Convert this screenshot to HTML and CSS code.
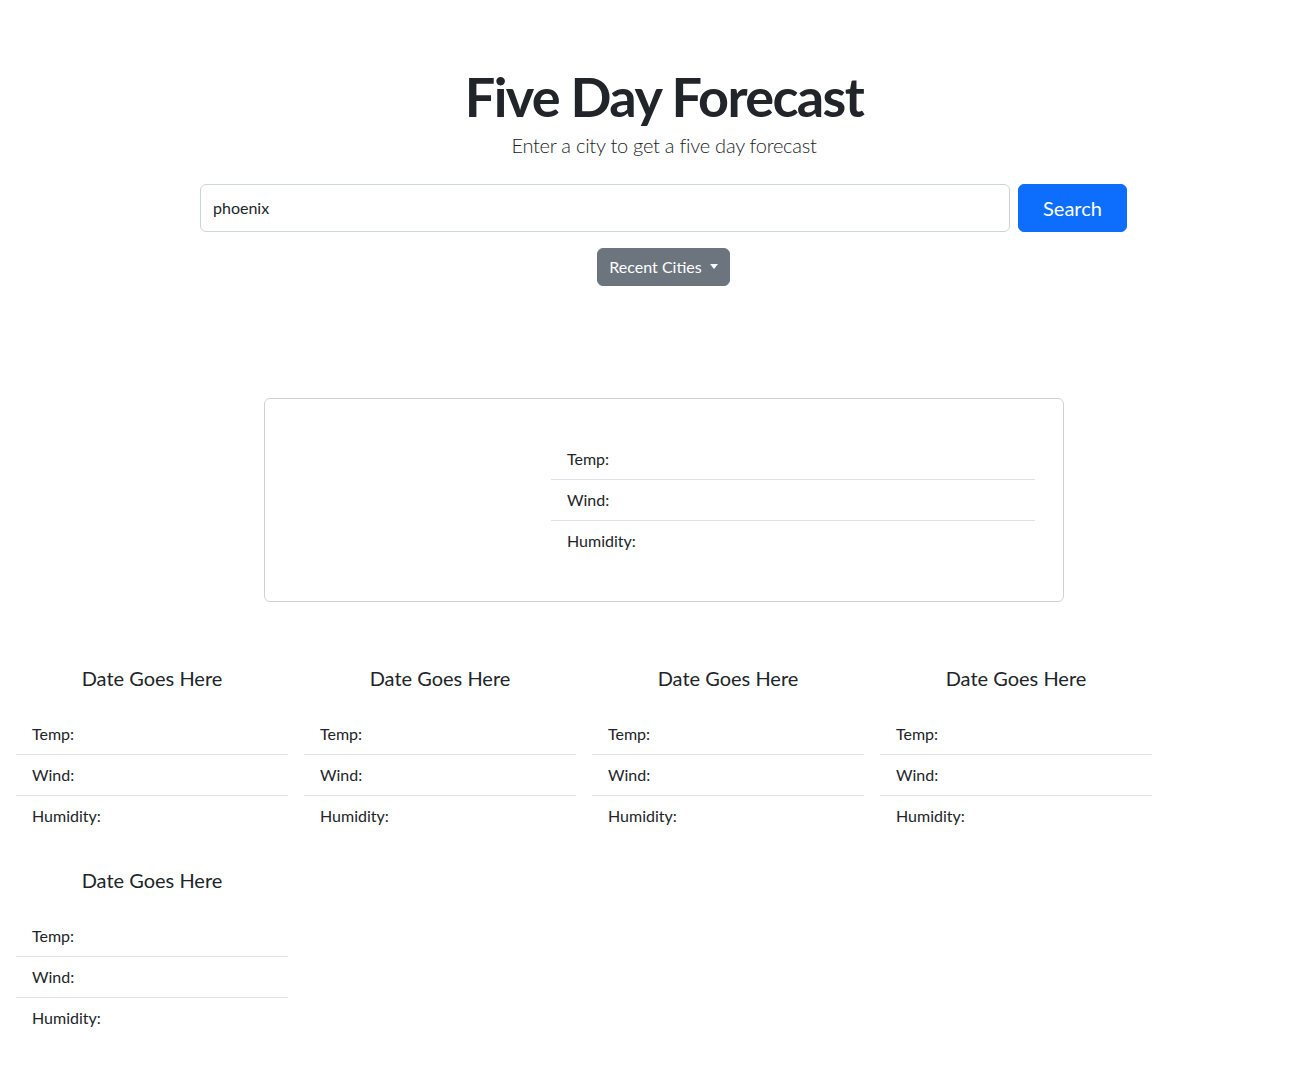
FILE: index.html
```html
<!DOCTYPE html>
<html lang="en">
<head>
<meta charset="utf-8">
<title>Five Day Forecast</title>
<link rel="stylesheet" href="styles.css">
</head>
<body>
<header class="hero">
  <h1 class="title">Five Day Forecast</h1>
  <p class="lead">Enter a city to get a five day forecast</p>
</header>
<section class="search">
  <div class="search-row">
    <input class="city-input" type="text" value="phoenix">
    <button class="btn-search" type="button">Search</button>
  </div>
  <div class="recent">
    <button class="btn-recent" type="button">Recent Cities <span class="caret"></span></button>
  </div>
</section>
<section class="current">
  <div class="current-card">
    <ul class="list">
      <li class="item">Temp:</li>
      <li class="item">Wind:</li>
      <li class="item">Humidity:</li>
    </ul>
  </div>
</section>
<section class="forecast">
  <div class="day">
    <h5 class="day-title">Date Goes Here</h5>
    <ul class="list"><li class="item">Temp:</li><li class="item">Wind:</li><li class="item">Humidity:</li></ul>
  </div>
  <div class="day">
    <h5 class="day-title">Date Goes Here</h5>
    <ul class="list"><li class="item">Temp:</li><li class="item">Wind:</li><li class="item">Humidity:</li></ul>
  </div>
  <div class="day">
    <h5 class="day-title">Date Goes Here</h5>
    <ul class="list"><li class="item">Temp:</li><li class="item">Wind:</li><li class="item">Humidity:</li></ul>
  </div>
  <div class="day">
    <h5 class="day-title">Date Goes Here</h5>
    <ul class="list"><li class="item">Temp:</li><li class="item">Wind:</li><li class="item">Humidity:</li></ul>
  </div>
  <div class="day">
    <h5 class="day-title">Date Goes Here</h5>
    <ul class="list"><li class="item">Temp:</li><li class="item">Wind:</li><li class="item">Humidity:</li></ul>
  </div>
</section>
</body>
</html>
```
FILE: styles.css
```css
* { box-sizing: border-box; }
body {
  margin: 0;
  font-family: Lato, "Open Sans", sans-serif;
  font-size: 16px;
  line-height: 1.5;
  color: #212529;
  background: #fff;
}
.hero {
  padding-top: 65px;
  margin-left: 14px;
  text-align: center;
}
.title {
  margin: 0;
  font-size: 54px;
  font-weight: 700;
  line-height: 1.2;
  letter-spacing: -1.6px;
}
.lead {
  margin: 0;
  font-size: 20px;
  font-weight: 300;
  line-height: 1.5;
  letter-spacing: -0.25px;
}
.search {
  margin: 24px 0 0 200px;
  width: 927px;
}
.search-row {
  display: flex;
  gap: 8px;
}
.city-input {
  width: 810px;
  height: 48px;
  padding: 0 12px;
  font: inherit;
  color: #212529;
  border: 1px solid #ced4da;
  border-radius: 6px;
  outline: none;
}
.btn-search {
  width: 109px;
  height: 48px;
  border: 1px solid #0d6efd;
  border-radius: 6px;
  background: #0d6efd;
  color: #fff;
  font: inherit;
  font-size: 20px;
}
.recent {
  display: flex;
  justify-content: center;
  margin-top: 16px;
}
.btn-recent {
  height: 38px;
  width: 133px;
  padding: 0 12px;
  border: 1px solid #6c757d;
  border-radius: 6px;
  background: #6c757d;
  color: #fff;
  font: inherit;
  white-space: nowrap;
  display: flex;
  align-items: center;
  justify-content: center;
  gap: 8px;
}
.caret {
  width: 0;
  height: 0;
  border-top: 5px solid #fff;
  border-left: 4px solid transparent;
  border-right: 4px solid transparent;
}
.current {
  margin: 112px 0 0 264px;
}
.current-card {
  width: 800px;
  height: 204px;
  border: 1px solid rgba(0,0,0,.175);
  border-radius: 6px;
  display: flex;
  align-items: center;
  padding: 0 28px 0 286px;
}
.list {
  list-style: none;
  margin: 0;
  padding: 0;
  width: 100%;
}
.item {
  padding: 8px 16px;
  line-height: 24px;
  font-size: 16px;
  border-bottom: 1px solid #dee2e6;
}
.item:last-child { border-bottom: 0; }
.forecast {
  display: grid;
  grid-template-columns: repeat(4, 288px);
  padding: 49px 0 0 8px;
}
.day {
  padding: 15px 8px 17px;
}
.day-title {
  margin: 0 0 24px;
  text-align: center;
  font-size: 20px;
  font-weight: 400;
  line-height: 24px;
}
```
